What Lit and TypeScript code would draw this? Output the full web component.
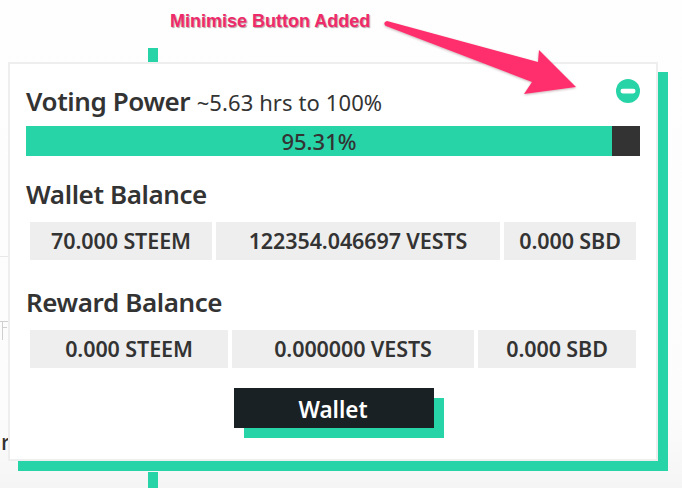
import { LitElement, html, css } from 'lit';
import { customElement } from 'lit/decorators.js';

const wallet = ['70.000 STEEM', '122354.046697 VESTS', '0.000 SBD'];
const reward = ['0.000 STEEM', '0.000000 VESTS', '0.000 SBD'];

@customElement('app-root')
export class AppRoot extends LitElement {
  static styles = css`
    :host {
      display: block;
      font-family: 'Noto Sans', 'Open Sans', sans-serif;
      color: #333;
    }

    .stage {
      position: relative;
      box-sizing: border-box;
      width: 682px;
      height: 488px;
      overflow: hidden;
      padding: 62px 0 0 8px;
      background: linear-gradient(180deg, #fefefe 0%, #fcfcfc 85%, #f5f5f5 100%);
    }

    /* page behind the popup */
    .stem {
      position: absolute;
      left: 148px;
      width: 10px;
      background: #26d4a8;
    }
    .stem.top { top: 48px; height: 14px; }
    .stem.bottom { top: 472px; height: 16px; }
    .rule {
      position: absolute;
      left: 0;
      top: 256px;
      width: 8px;
      height: 1px;
      background: #e8e8e8;
    }
    .glyph {
      position: absolute;
      left: 0;
      top: 318px;
      width: 8px;
      height: 24px;
    }
    .stray {
      position: absolute;
      left: 1px;
      top: 428px;
      font-size: 22px;
      line-height: 26px;
      font-weight: 500;
    }

    .card {
      position: relative;
      box-sizing: border-box;
      width: 650px;
      height: 399px;
      padding: 20px 16px 0 16px;
      background: #fff;
      border: 2px solid #eee;
      box-shadow: 10px 10px 0 #26d4a8;
    }

    .minimise {
      position: absolute;
      top: 15px;
      right: 16px;
      width: 24px;
      height: 24px;
      display: block;
    }

    h2 {
      margin: 0;
      font-size: 26px;
      line-height: 34px;
      font-weight: 600;
      letter-spacing: -0.4px;
      color: #333;
    }
    h2 small {
      font-size: 22px;
      font-weight: 400;
      letter-spacing: 0.1px;
    }

    .bar {
      margin-top: 7px;
      height: 30px;
      background: #333;
    }
    .fill {
      height: 100%;
      background: #26d4a8;
      text-align: center;
      font-size: 22px;
      line-height: 31px;
      font-weight: 500;
    }

    .wallet-title { margin-top: 21px; }
    .reward-title { margin-top: 25px; }

    .pills {
      display: grid;
      gap: 4px;
      margin: 11px 4px 0 4px;
      height: 38px;
    }
    .pills.wallet { grid-template-columns: 182px 284px 132px; }
    .pills.reward { grid-template-columns: 198px 242px 158px; }
    .pill {
      background: #eee;
      text-align: center;
      font-size: 21.5px;
      line-height: 38px;
      font-weight: 600;
      letter-spacing: -0.1px;
      white-space: nowrap;
    }

    .actions {
      display: flex;
      justify-content: center;
      margin-top: 20px;
      padding-left: 2px;
    }
    .wallet-btn {
      width: 200px;
      height: 40px;
      border: 0;
      padding: 0 2px 0 0;
      background: #1a2125;
      color: #fff;
      font: 600 22.5px/43px 'Noto Sans', 'Open Sans', sans-serif;
      box-shadow: 10px 10px 0 #26d4a8;
    }

    .note {
      position: absolute;
      left: 170px;
      top: 11px;
      font: 700 18px/20px 'Liberation Sans', Arial, sans-serif;
      color: #ee2a6b;
      text-shadow: 1px 1px 1px rgba(90, 40, 50, 0.45);
      white-space: nowrap;
    }
    .arrow {
      position: absolute;
      left: 0;
      top: 0;
      width: 682px;
      height: 488px;
      pointer-events: none;
    }
  `;

  render() {
    return html`
      <div class="stage">
        <div class="stem top"></div>
        <div class="stem bottom"></div>
        <div class="rule"></div>
        <svg class="glyph" viewBox="0 0 8 24" fill="none" stroke="#cfcfcf" stroke-width="1">
          <path d="M0 3.5H8M2.5 4V22M2.5 9.5H7"></path>
        </svg>
        <div class="stray">r</div>

        <div class="card">
          <svg class="minimise" viewBox="0 0 24 24">
            <circle cx="12" cy="12" r="12" fill="#26d4a8"></circle>
            <rect x="4.5" y="9.8" width="15" height="4.6" rx="2.3" fill="#fff"></rect>
          </svg>

          <h2>Voting Power <small>~5.63 hrs to 100%</small></h2>
          <div class="bar">
            <div class="fill" style="width: 586px">95.31%</div>
          </div>

          <h2 class="wallet-title">Wallet Balance</h2>
          <div class="pills wallet">
            ${wallet.map((v) => html`<div class="pill">${v}</div>`)}
          </div>

          <h2 class="reward-title">Reward Balance</h2>
          <div class="pills reward">
            ${reward.map((v) => html`<div class="pill">${v}</div>`)}
          </div>

          <div class="actions">
            <button class="wallet-btn">Wallet</button>
          </div>
        </div>

        <div class="note">Minimise Button Added</div>
        <svg class="arrow" viewBox="0 0 682 488">
          <defs>
            <filter id="soft" x="-10%" y="-10%" width="120%" height="130%">
              <feDropShadow dx="0" dy="1" stdDeviation="1" flood-color="#5a2832" flood-opacity="0.35"></feDropShadow>
            </filter>
          </defs>
          <path
            d="M385 22 C384 23 384 25 386 26 L532 82 L524 94 L576 87 L539 50 L538 62 L387 21 Z"
            fill="#ff2f6c"
            filter="url(#soft)"
          ></path>
        </svg>
      </div>
    `;
  }
}

declare global {
  interface HTMLElementTagNameMap {
    'app-root': AppRoot;
  }
}
